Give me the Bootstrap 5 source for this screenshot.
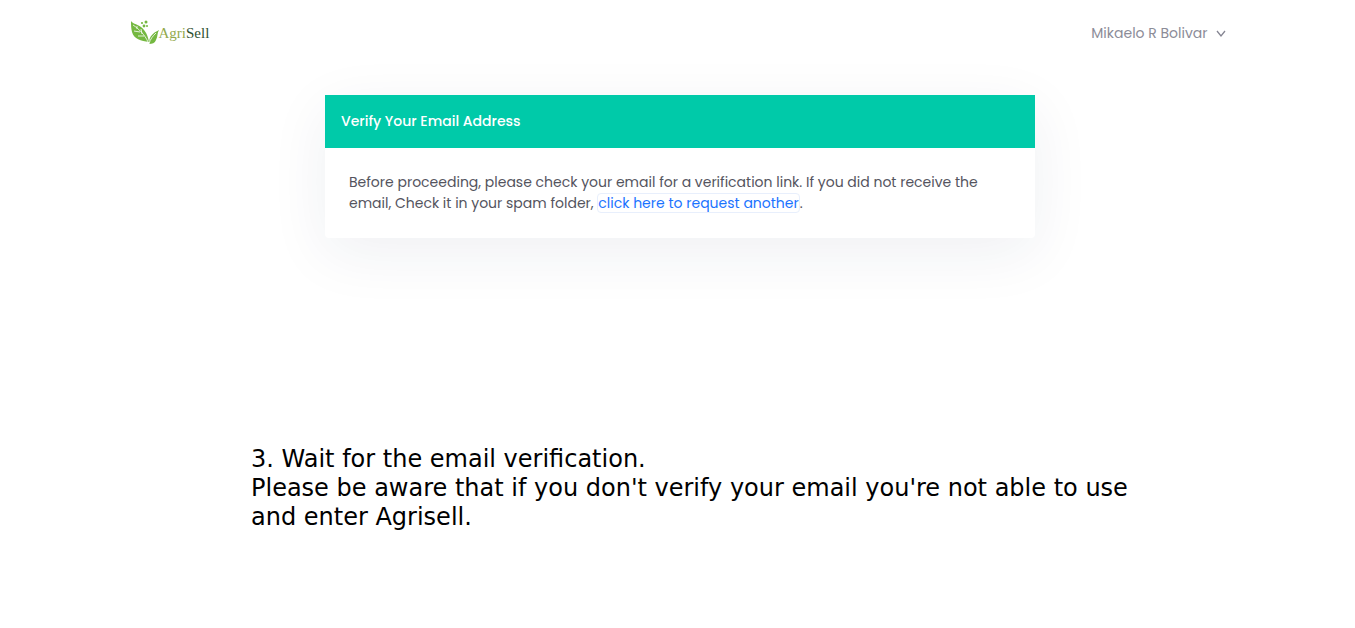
<!DOCTYPE html>
<html lang="en">
<head>
<meta charset="utf-8">
<meta name="viewport" content="width=device-width, initial-scale=1">
<title>AgriSell - Verify Your Email Address</title>
<link href="https://cdn.jsdelivr.net/npm/bootstrap@5.3.0/dist/css/bootstrap.min.css" rel="stylesheet">
<style>
  body { font-family: Poppins, Inter, sans-serif; font-size: 14px; line-height: 21px; color: #525f7f; background: #fff; }
  .site-bar { max-width: 1140px; padding: 19px 22px; }
  .brand-leaf { width: 29px; height: 25px; }
  .brand-name { font: 15px/28px "Liberation Serif", serif; color: #93aa4b; }
  .brand-name b { font-weight: 400; color: #2f5130; }
  .user-link { color: #8c8c98; font-size: 14px; }
  .verify-area { padding: 29px 16px 0 21px; }
  .verify-card { max-width: 710px; --bs-card-border-width: 0; --bs-card-border-radius: 4px; box-shadow: 0 15px 60px rgba(32, 44, 82, .07); }
  .verify-card .card-header { background: #00caa9; color: #fff; padding: 16px; border-radius: 0; font-weight: 500; }
  .verify-card .card-body { padding: 24px; color: #54545e; }
  .resend { font-size: 14px; color: #1a73ff; line-height: 18px; border: 1px solid #e8effc; border-radius: 4px; }
  .step-area { padding: 207px 16px 32px; }
  .step-text { max-width: 886px; font: 24px/29px "DejaVu Sans", sans-serif; color: #000; }
  .step-wrap { padding-left: 33px; }
</style>
</head>
<body>
<header>
  <nav class="site-bar container d-flex align-items-center justify-content-between" aria-label="Main">
    <a href="#" class="d-flex align-items-start text-decoration-none">
      <svg class="brand-leaf" viewBox="0 0 29 25" aria-hidden="true">
        <path fill="#74b840" d="M1 2C3 5 7 5 11 8c5 4 7 9 8 15C11 22 4 20 2 13 1 9 1 6 1 2Z"/>
        <path fill="#74b840" d="M29 11c-2 3-1 6-3 10-1 3-4 4-7 4 0-8 4-11 10-14Z"/>
        <path fill="none" stroke="#fff" stroke-width=".8" d="M3 6c6 4 12 10 15 17M7 10l0-3M12 15l-1-5M10 13l-6-1M14 17l-6 0M19 25c1-5 4-8 7-11"/>
        <g fill="#74b840"><circle cx="12" cy="4" r="1.1"/><circle cx="16" cy="3" r="1.5"/><circle cx="14" cy="7" r="1.4"/><circle cx="17" cy="7" r="1"/></g>
      </svg>
      <span class="brand-name">Agri<b>Sell</b></span>
    </a>
    <a href="#" class="user-link d-flex align-items-center gap-2 text-decoration-none">
      Mikaelo R Bolivar
      <svg width="10" height="10" viewBox="0 0 10 10" fill="none" stroke="#858592" stroke-width="1.3" aria-hidden="true"><path d="M1 3l4 5 4-5"/></svg>
    </a>
  </nav>
</header>
<main>
  <section class="verify-area">
    <div class="verify-card card mx-auto">
      <div class="card-header">Verify Your Email Address</div>
      <div class="card-body">
        Before proceeding, please check your email for a verification link. If you did not receive the email, Check it in your spam folder,
        <button type="button" class="resend btn btn-link p-0 m-0 align-baseline text-decoration-none">click here to request another</button>.
      </div>
    </div>
  </section>
  <section class="step-area">
    <div class="step-wrap">
      <p class="step-text mx-auto mb-0">3. Wait for the email verification.<br>Please be aware that if you don't verify your email you're not able to use and enter Agrisell.</p>
    </div>
  </section>
</main>
<script src="https://cdn.jsdelivr.net/npm/bootstrap@5.3.0/dist/js/bootstrap.bundle.min.js"></script>
</body>
</html>
